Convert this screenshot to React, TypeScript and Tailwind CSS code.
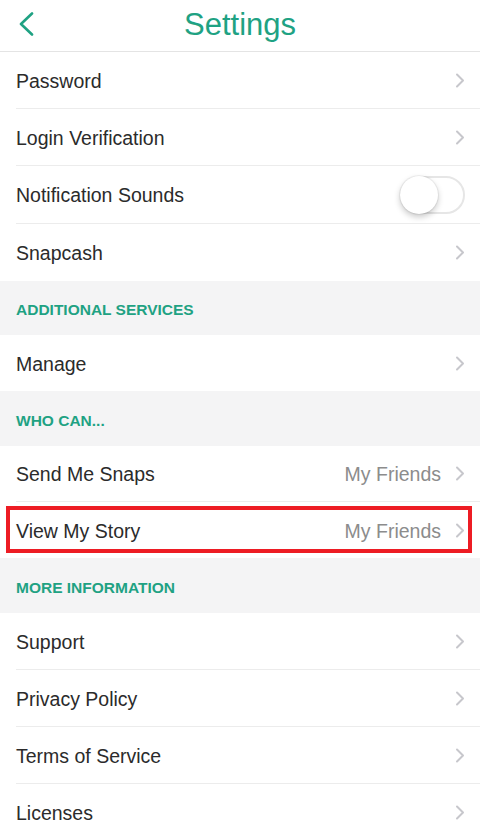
import React from "react";

const GREEN = "text-[#1fa283]";

const Chevron = () => (
  <svg width="10" height="15" viewBox="0 0 10 15" className="shrink-0">
    <polyline points="2,1.5 8,7.5 2,13.5" fill="none" stroke="#c7c7cc" strokeWidth="2" strokeLinecap="round" strokeLinejoin="round" />
  </svg>
);

const Toggle = () => (
  <div className="relative w-[65px] h-[38px] rounded-full border-2 border-[#e6e6e6] bg-white">
    <div className="absolute -left-[2px] -top-[2px] w-[38px] h-[38px] rounded-full bg-white shadow-[0_3px_6px_rgba(0,0,0,0.22),0_0_0_1px_rgba(0,0,0,0.05)]" />
  </div>
);

type RowProps = {
  label: string;
  value?: string;
  toggle?: boolean;
  last?: boolean;
  h?: string;
  highlight?: boolean;
};

const Row = ({ label, value, toggle, last, h = "h-[57px]", highlight }: RowProps) => (
  <div className={`relative bg-white pl-4 ${h}`}>
    <div className={`flex h-full items-center justify-between pr-[15px] ${last ? "" : "border-b border-[#ececec]"}`}>
      <span className="pt-[3px] text-[19.5px] text-[#2b2b2b]">{label}</span>
      <div className="flex items-center gap-[14px]">
        {value && <span className="pt-[3px] text-[19.5px] text-[#8c8c8c]">{value}</span>}
        {toggle ? <Toggle /> : <Chevron />}
      </div>
    </div>
    {highlight && (
      <div className="pointer-events-none absolute left-[6px] right-[8px] top-[4px] h-[47px] border-4 border-[#ed1c24]" />
    )}
  </div>
);

const SectionHeader = ({ title, h = "h-[55px]" }: { title: string; h?: string }) => (
  <div className={`flex items-center bg-[#f4f4f5] px-4 pt-[4px] ${h}`}>
    <span className={`text-[15.5px] font-bold ${GREEN}`}>{title}</span>
  </div>
);

export default function App() {
  return (
    <div className="h-[831px] w-[480px] overflow-hidden bg-white font-['Liberation_Sans',Arial,sans-serif]">
      {/* Top bar */}
      <div className="relative flex h-[52px] items-center justify-center border-b border-[#e4e4e4] bg-white">
        <svg width="16" height="24" viewBox="0 0 16 24" className="absolute left-[18px] top-[12px]">
          <polyline points="14,1.5 3,12 14,22.5" fill="none" stroke="#1fa283" strokeWidth="2.6" strokeLinecap="round" strokeLinejoin="round" />
        </svg>
        <h1 className={`text-[31px] leading-none ${GREEN} -mt-[3px]`}>Settings</h1>
      </div>

      <Row label="Password" />
      <Row label="Login Verification" />
      <Row label="Notification Sounds" toggle h="h-[58px]" />
      <Row label="Snapcash" last />

      <SectionHeader title="ADDITIONAL SERVICES" h="h-[54px]" />
      <Row label="Manage" last h="h-[56px]" />

      <SectionHeader title="WHO CAN..." />
      <Row label="Send Me Snaps" value="My Friends" h="h-[56px]" />
      <Row label="View My Story" value="My Friends" last h="h-[56px]" highlight />

      <SectionHeader title="MORE INFORMATION" />
      <Row label="Support" />
      <Row label="Privacy Policy" />
      <Row label="Terms of Service" />
      <Row label="Licenses" last />
    </div>
  );
}
